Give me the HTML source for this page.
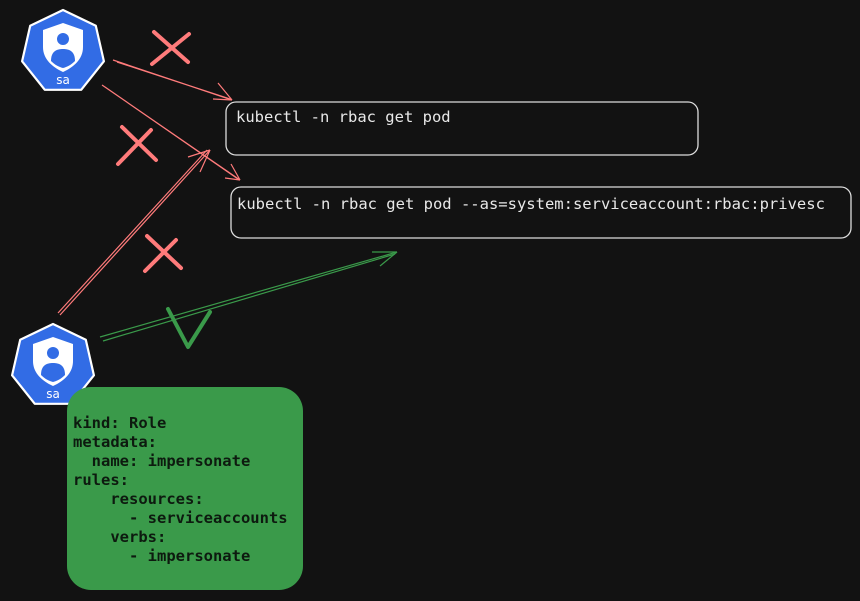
<!DOCTYPE html>
<html><head><meta charset="utf-8"><style>
html,body{margin:0;padding:0;background:#121212;}
svg{display:block}
.c{font-family:"DejaVu Sans Mono","Liberation Mono",monospace;font-size:15.5px;fill:#e8e8e8}
.g{font-family:"DejaVu Sans Mono","Liberation Mono",monospace;font-size:15.5px;font-weight:bold;fill:#0d1a0f;white-space:pre}
</style></head><body>
<svg width="860" height="601" viewBox="0 0 860 601" xmlns="http://www.w3.org/2000/svg">
<rect width="860" height="601" fill="#121212"/>
<defs>
<g id="sa">
<polygon points="0,-42 32.8,-26.2 40.9,9.3 18.2,37.8 -18.2,37.8 -40.9,9.3 -32.8,-26.2" fill="#326ce5" stroke="#fff" stroke-width="2.2" stroke-linejoin="round"/>
<path d="M0,-29 L20,-22 L20,-5 C20,7 11,15 0,20 C-11,15 -20,7 -20,-5 L-20,-22 Z" fill="#fff"/>
<circle cx="0" cy="-13" r="6" fill="#326ce5"/>
<path d="M-12,9 C-12,-1 -6,-3 0,-3 C6,-3 12,-1 12,9 C8,13 4,15 0,16 C-4,15 -8,13 -12,9 Z" fill="#326ce5"/>
<text x="0" y="32" text-anchor="middle" font-family="DejaVu Sans,sans-serif" font-size="12" fill="#fff">sa</text>
</g>
</defs>
<use href="#sa" x="63" y="52"/>
<use href="#sa" x="53" y="366"/>

<g stroke="#ff7b7b" stroke-width="1.2" fill="none">
<path d="M113,60 L232,100 M117,62 L230,99"/>
<path d="M213,99 L232,100 M218,83 L232,100"/>
<path d="M102,85 L240,180 M105,87 L238,179"/>
<path d="M225,178 L240,180 M231,164 L240,180"/>
<path d="M60,315 L210,150 M58,313 L207,150"/>
<path d="M188,157 L210,150 M200,172 L210,150"/>
</g>
<g stroke="#ff7b7b" stroke-width="4" stroke-linecap="round" fill="none">
<path d="M154,32 L188,62 M189,34 L152,64"/>
<path d="M122,127 L156,160 M151,130 L118,164"/>
<path d="M147,236 L181,268 M176,240 L145,271"/>
</g>
<g stroke="#3a9a4a" stroke-width="1.2" fill="none">
<path d="M100,337 L397,252 M103,341 L395,254"/>
<path d="M372,252 L397,252 M380,266 L397,252"/>
</g>
<path d="M168,309 L188,347 L210,312" stroke="#3a9a4a" stroke-width="4" fill="none" stroke-linecap="round" stroke-linejoin="round"/>

<rect x="226" y="102" width="472" height="53" rx="10" fill="none" stroke="#dcdcdc" stroke-width="1.3"/>
<text class="c" x="236" y="122">kubectl -n rbac get pod</text>
<rect x="231" y="187" width="620" height="51" rx="10" fill="none" stroke="#dcdcdc" stroke-width="1.3"/>
<text class="c" x="237" y="209">kubectl -n rbac get pod --as=system:serviceaccount:rbac:privesc</text>

<rect x="67" y="387" width="236" height="203" rx="24" fill="#3a9a4a"/>
<text class="g" x="73" y="428">kind: Role</text>
<text class="g" x="73" y="447">metadata:</text>
<text class="g" x="73" y="466">  name: impersonate</text>
<text class="g" x="73" y="485">rules:</text>
<text class="g" x="73" y="504">    resources:</text>
<text class="g" x="73" y="523">      - serviceaccounts</text>
<text class="g" x="73" y="542">    verbs:</text>
<text class="g" x="73" y="561">      - impersonate</text>
</svg>
</body></html>
